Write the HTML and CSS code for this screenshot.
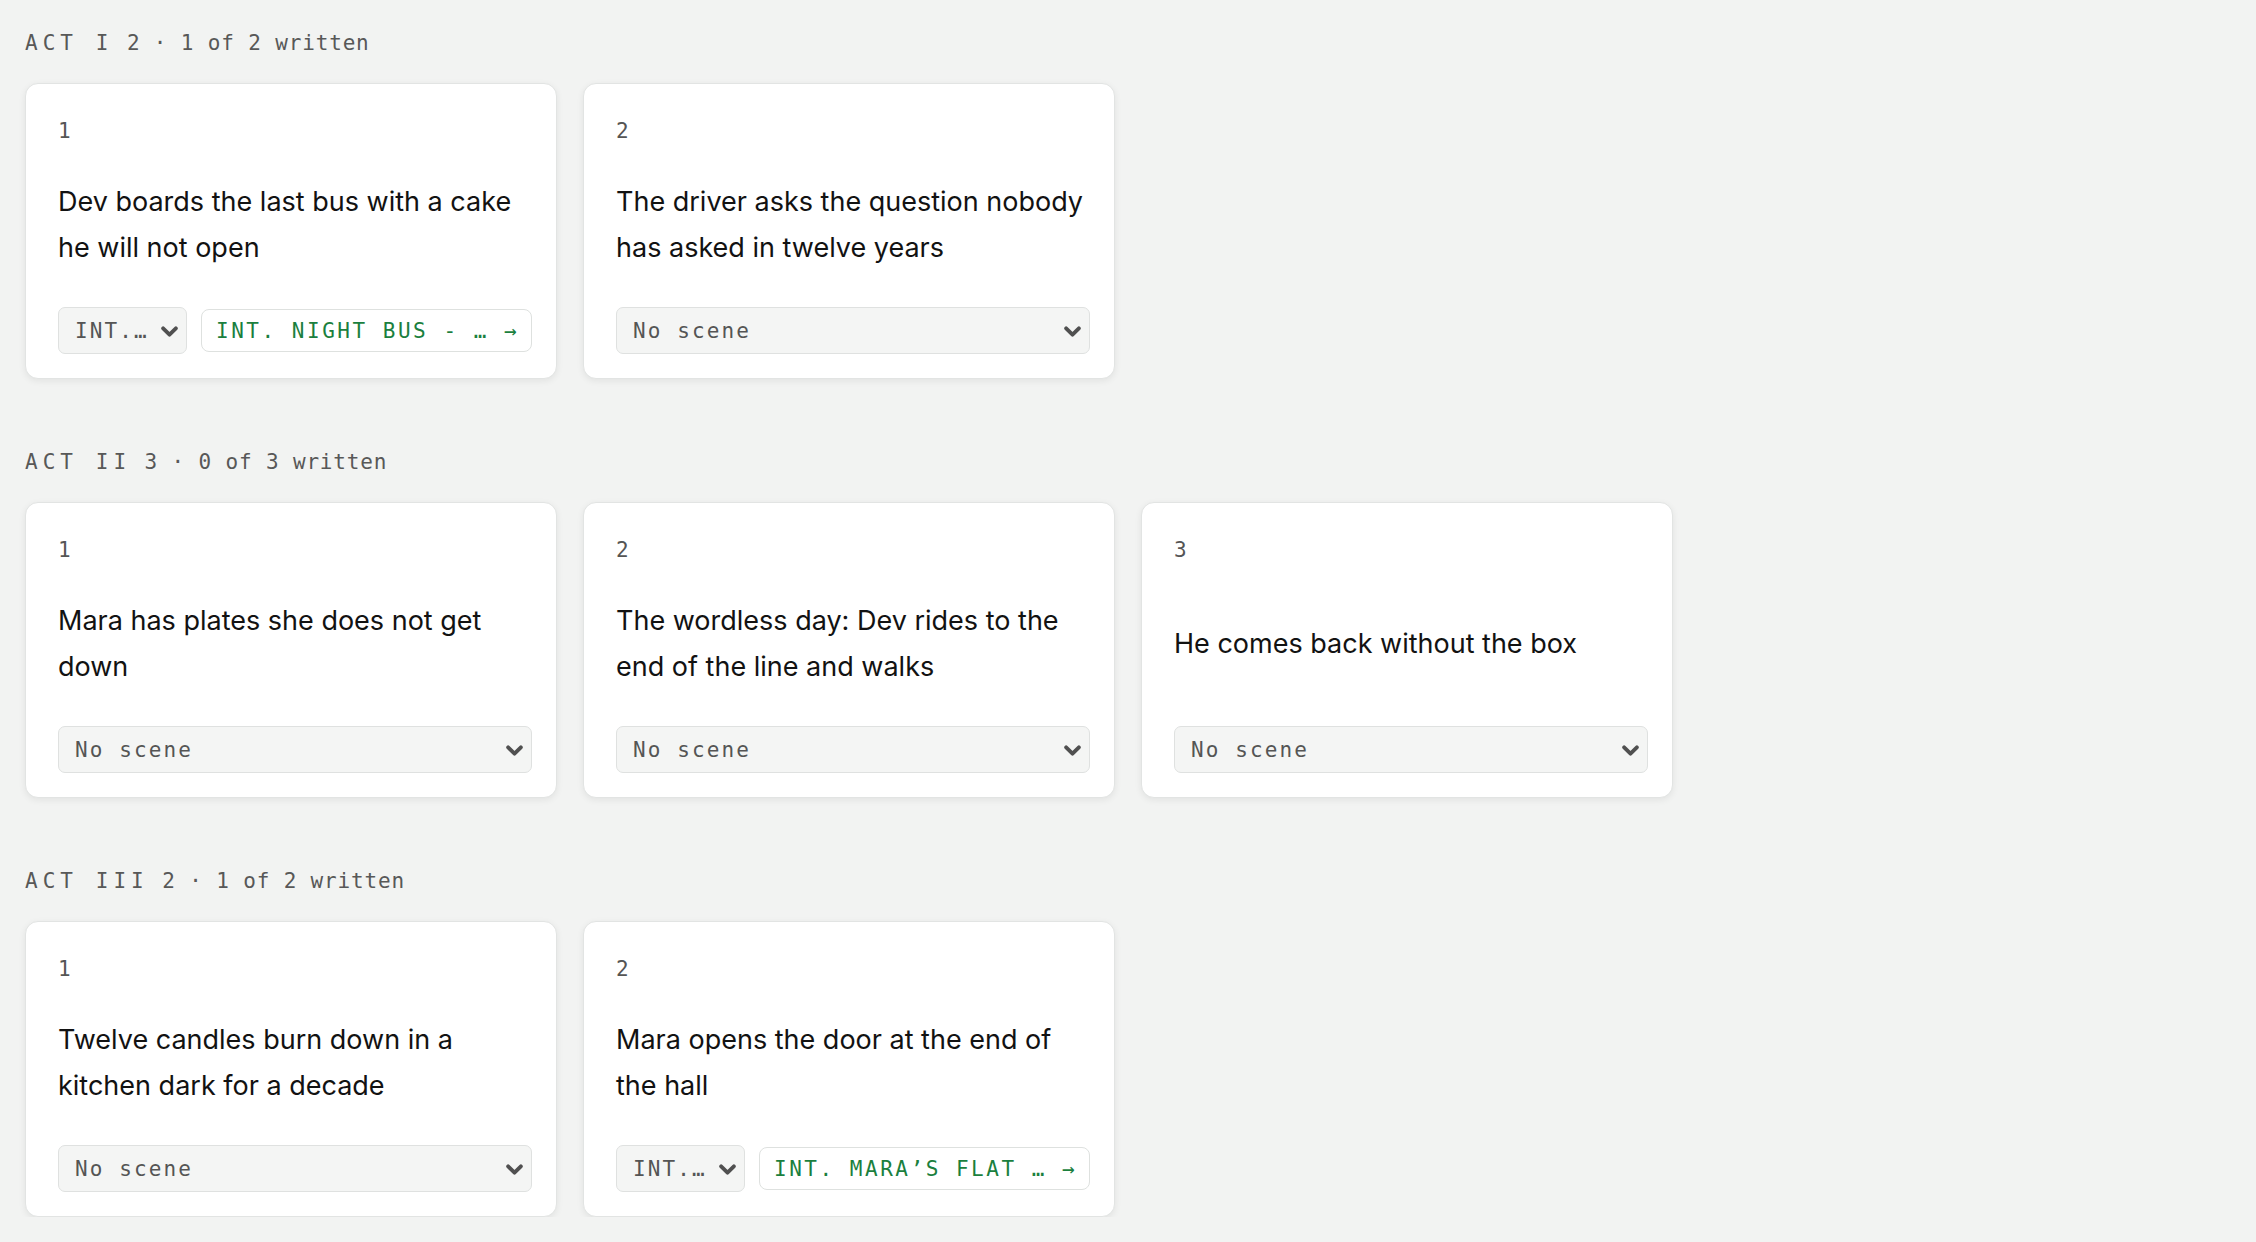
FILE: index.html
```html
<!DOCTYPE html>
<html>
<head>
  <meta charset="utf-8">
  <link rel="stylesheet" href="styles.css">
</head>
<body>
  <main class="board">

    <section class="act">
      <h2 class="act-head"><span class="act-name">ACT I</span> 2 · 1 of 2 written</h2>
      <div class="beats">
        <div class="beat">
          <div class="beat-num">1</div>
          <p class="beat-text">Dev boards the last bus with a cake he will not open</p>
          <div class="beat-scene">
            <div class="select-wrap short">
              <select class="scene-select">
                <option>INT. NIGHT BUS - NIGHT</option>
                <option>No scene</option>
              </select>
              <svg class="chevron" viewBox="0 0 16 10"><polyline points="2,2 8,8 14,2"/></svg>
            </div>
            <button type="button" class="scene-link">INT. NIGHT BUS - … →</button>
          </div>
        </div>

        <div class="beat">
          <div class="beat-num">2</div>
          <p class="beat-text">The driver asks the question nobody has asked in twelve years</p>
          <div class="beat-scene">
            <div class="select-wrap">
              <select class="scene-select">
                <option>No scene</option>
              </select>
              <svg class="chevron" viewBox="0 0 16 10"><polyline points="2,2 8,8 14,2"/></svg>
            </div>
          </div>
        </div>
      </div>
    </section>

    <section class="act">
      <h2 class="act-head"><span class="act-name">ACT II</span> 3 · 0 of 3 written</h2>
      <div class="beats">
        <div class="beat">
          <div class="beat-num">1</div>
          <p class="beat-text">Mara has plates she does not get down</p>
          <div class="beat-scene">
            <div class="select-wrap">
              <select class="scene-select">
                <option>No scene</option>
              </select>
              <svg class="chevron" viewBox="0 0 16 10"><polyline points="2,2 8,8 14,2"/></svg>
            </div>
          </div>
        </div>

        <div class="beat">
          <div class="beat-num">2</div>
          <p class="beat-text">The wordless day: Dev rides to the end of the line and walks</p>
          <div class="beat-scene">
            <div class="select-wrap">
              <select class="scene-select">
                <option>No scene</option>
              </select>
              <svg class="chevron" viewBox="0 0 16 10"><polyline points="2,2 8,8 14,2"/></svg>
            </div>
          </div>
        </div>

        <div class="beat">
          <div class="beat-num">3</div>
          <p class="beat-text">He comes back without the box</p>
          <div class="beat-scene">
            <div class="select-wrap">
              <select class="scene-select">
                <option>No scene</option>
              </select>
              <svg class="chevron" viewBox="0 0 16 10"><polyline points="2,2 8,8 14,2"/></svg>
            </div>
          </div>
        </div>
      </div>
    </section>

    <section class="act">
      <h2 class="act-head"><span class="act-name">ACT III</span> 2 · 1 of 2 written</h2>
      <div class="beats">
        <div class="beat">
          <div class="beat-num">1</div>
          <p class="beat-text">Twelve candles burn down in a kitchen dark for a decade</p>
          <div class="beat-scene">
            <div class="select-wrap">
              <select class="scene-select">
                <option>No scene</option>
              </select>
              <svg class="chevron" viewBox="0 0 16 10"><polyline points="2,2 8,8 14,2"/></svg>
            </div>
          </div>
        </div>

        <div class="beat">
          <div class="beat-num">2</div>
          <p class="beat-text">Mara opens the door at the end of the hall</p>
          <div class="beat-scene">
            <div class="select-wrap short">
              <select class="scene-select">
                <option>INT. MARA'S FLAT - NIGHT</option>
                <option>No scene</option>
              </select>
              <svg class="chevron" viewBox="0 0 16 10"><polyline points="2,2 8,8 14,2"/></svg>
            </div>
            <button type="button" class="scene-link">INT. MARA’S FLAT … →</button>
          </div>
        </div>
      </div>
    </section>

  </main>
</body>
</html>
```

FILE: styles.css
```css
body {
  margin: 0;
  padding: 28px 25px 0;
  background: #f2f3f2;
  font-family: Inter, "Noto Sans", sans-serif;
  color: #121212;
}

.act {
  margin-bottom: 68px;
}

.act:last-child {
  margin-bottom: 0;
}

.act-head {
  margin: 0 0 25px;
  font-family: "DejaVu Sans Mono", "Liberation Mono", monospace;
  font-size: 21px;
  font-weight: normal;
  line-height: 30px;
  letter-spacing: 0.04em;
  color: #585858;
}

.act-name {
  letter-spacing: 0.24em;
}

.beats {
  display: grid;
  grid-template-columns: repeat(auto-fill, 532px);
  gap: 26px;
}

.beat {
  box-sizing: border-box;
  width: 532px;
  padding: 32px 24px 24px 32px;
  background: white;
  border: 1px solid #e2e4e3;
  border-radius: 13px;
  box-shadow: 0 2px 7px rgba(0, 0, 0, 0.07);
}

.beat-num {
  font-family: "DejaVu Sans Mono", "Liberation Mono", monospace;
  font-size: 21px;
  line-height: 30px;
  color: #555;
}

.beat-text {
  display: flex;
  align-items: center;
  min-height: 92px;
  margin: 33px 0 36px;
  font-size: 27px;
  line-height: 46px;
}

.beat-scene {
  display: flex;
  align-items: center;
  gap: 14px;
  height: 47px;
}

.select-wrap {
  position: relative;
  flex: 1;
  height: 100%;
}

.select-wrap.short {
  flex: 0 0 129px;
}

.scene-select {
  appearance: none;
  -webkit-appearance: none;
  box-sizing: border-box;
  width: 100%;
  height: 100%;
  padding: 0 37px 0 16px;
  background: #f4f5f4;
  border: 1.5px solid #dfe1e0;
  border-radius: 7px;
  font-family: "DejaVu Sans Mono", "Liberation Mono", monospace;
  font-size: 21px;
  letter-spacing: 0.1em;
  color: #555;
  text-overflow: ellipsis;
  white-space: nowrap;
  overflow: hidden;
}

.chevron {
  position: absolute;
  right: 9px;
  top: 50%;
  width: 17px;
  height: 11px;
  margin-top: -5px;
  fill: none;
  stroke: #505050;
  stroke-width: 3.6;
  stroke-linecap: round;
  stroke-linejoin: round;
  pointer-events: none;
}

.scene-link {
  flex: 1;
  min-width: 0;
  height: 43px;
  padding: 0 14px;
  background: white;
  border: 1.5px solid #dee1df;
  border-radius: 8px;
  font-family: "DejaVu Sans Mono", "Liberation Mono", monospace;
  font-size: 21px;
  letter-spacing: 0.12em;
  color: #1b7f3e;
  text-align: left;
  white-space: nowrap;
  overflow: hidden;
  cursor: pointer;
}
```
